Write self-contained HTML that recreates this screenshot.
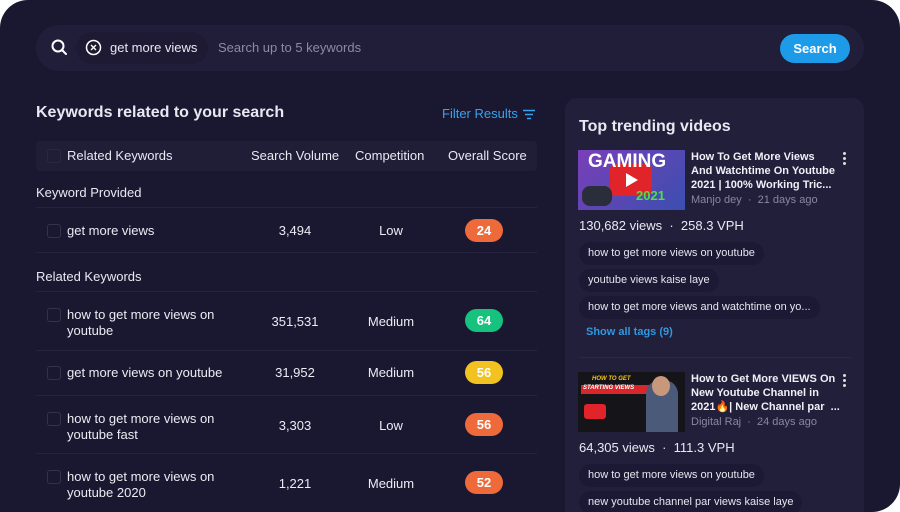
<!DOCTYPE html>
<html><head><meta charset="utf-8"><style>
*{margin:0;padding:0;box-sizing:border-box}
html,body{width:900px;height:512px;background:#fff;overflow:hidden}
body{font-family:"Liberation Sans",sans-serif;color:#e9e8f2;position:relative}
.frame{position:absolute;left:0;top:0;width:900px;height:512px;background:#1a1830;border-radius:28px 28px 28px 0;overflow:hidden}
.abs{position:absolute}
.search{left:36px;top:25px;width:828px;height:46px;background:#211e39;border-radius:23px}
.chip{left:76px;top:32px;width:132px;height:32px;background:#1e1a34;border-radius:16px}
.btn{left:780px;top:34px;width:70px;height:29px;background:#1d9ae8;border-radius:15px;color:#fff;font-size:13px;font-weight:bold;text-align:center;line-height:29px}
.t{position:absolute;white-space:nowrap}
.hdr{left:36px;top:141px;width:501px;height:30px;background:#201d36;border-radius:4px}
.sep{position:absolute;left:36px;width:501px;height:1px;background:#26233f}
.cb{position:absolute;left:47px;width:14px;height:14px;border:1.5px solid #34304e;border-radius:3px}
.badge{position:absolute;left:465px;width:38px;height:23px;border-radius:12px;color:#fff;font-weight:bold;font-size:13px;text-align:center;line-height:23px}
.kw{font-size:13px;line-height:16px;color:#ecebf3}
.num{font-size:13px;text-align:center;width:100px;color:#ecebf3}
.panel{left:565px;top:98px;width:299px;height:430px;background:#221f3b;border-radius:12px}
.tag{position:absolute;left:579px;height:23px;background:#1c1934;border-radius:12px;font-size:11px;line-height:23px;padding:0 9px;color:#e6e5ef;white-space:nowrap}
.vt{font-size:11px;line-height:14px;color:#f0eff6;font-weight:bold}
.dots{position:absolute;width:3px;height:3px;background:#ddd;border-radius:50%;box-shadow:0 5px 0 #ddd,0 10px 0 #ddd}
</style></head><body><div class="frame">
<div class="abs search"></div>
<svg class="abs" style="left:51px;top:39px" width="17" height="17" viewBox="0 0 17 17"><circle cx="7" cy="7" r="5.5" fill="none" stroke="#fff" stroke-width="2"/><line x1="11" y1="11" x2="15" y2="15" stroke="#fff" stroke-width="2" stroke-linecap="round"/></svg>
<div class="abs chip"></div>
<svg class="abs" style="left:85px;top:39px" width="17" height="17" viewBox="0 0 17 17"><circle cx="8.5" cy="8.5" r="7" fill="none" stroke="#fff" stroke-width="1.5"/><path d="M6 6L11 11M11 6L6 11" stroke="#fff" stroke-width="1.4"/></svg>
<div class="t" style="left:110px;top:40px;font-size:13px">get more views</div>
<div class="t" style="left:218px;top:40px;font-size:13px;color:#8d8aa3">Search up to 5 keywords</div>
<div class="abs btn">Search</div>

<div class="t" style="left:36px;top:104px;font-size:16px;font-weight:bold">Keywords related to your search</div>
<div class="t" style="left:442px;top:106px;font-size:13px;color:#35a3ee">Filter Results</div>
<svg class="abs" style="left:522px;top:109px" width="14" height="11"><path d="M1 1.5H13M3 5.5H11M5 9.5H9" stroke="#35a3ee" stroke-width="1.6"/></svg>

<div class="abs hdr"></div>
<div class="cb" style="top:149px;border-color:#2a2743"></div>
<div class="t" style="left:67px;top:148px;font-size:13px">Related Keywords</div>
<div class="t" style="left:251px;top:148px;font-size:13px">Search Volume</div>
<div class="t" style="left:355px;top:148px;font-size:13px">Competition</div>
<div class="t" style="left:448px;top:148px;font-size:13px">Overall Score</div>

<div class="t" style="left:36px;top:185px;font-size:13px">Keyword Provided</div>
<div class="sep" style="top:207px"></div>
<div class="cb" style="top:224px"></div>
<div class="t kw" style="left:67px;top:223px">get more views</div>
<div class="t num" style="left:245px;top:223px">3,494</div>
<div class="t num" style="left:341px;top:223px">Low</div>
<div class="badge" style="top:219px;background:#ef6a3a">24</div>
<div class="sep" style="top:252px"></div>

<div class="t" style="left:36px;top:269px;font-size:13px">Related Keywords</div>
<div class="sep" style="top:291px"></div>
<div class="cb" style="top:308px"></div>
<div class="t kw" style="left:67px;top:307px">how to get more views on<br>youtube</div>
<div class="t num" style="left:245px;top:314px">351,531</div>
<div class="t num" style="left:341px;top:314px">Medium</div>
<div class="badge" style="top:309px;background:#16c27d">64</div>
<div class="sep" style="top:350px"></div>
<div class="cb" style="top:366px"></div>
<div class="t kw" style="left:67px;top:365px">get more views on youtube</div>
<div class="t num" style="left:245px;top:365px">31,952</div>
<div class="t num" style="left:341px;top:365px">Medium</div>
<div class="badge" style="top:361px;background:#f2c320">56</div>
<div class="sep" style="top:395px"></div>
<div class="cb" style="top:412px"></div>
<div class="t kw" style="left:67px;top:411px">how to get more views on<br>youtube fast</div>
<div class="t num" style="left:245px;top:418px">3,303</div>
<div class="t num" style="left:341px;top:418px">Low</div>
<div class="badge" style="top:413px;background:#ef6a3a">56</div>
<div class="sep" style="top:453px"></div>
<div class="cb" style="top:470px"></div>
<div class="t kw" style="left:67px;top:469px">how to get more views on<br>youtube 2020</div>
<div class="t num" style="left:245px;top:476px">1,221</div>
<div class="t num" style="left:341px;top:476px">Medium</div>
<div class="badge" style="top:471px;background:#ef6a3a">52</div>

<div class="abs panel"></div>
<div class="t" style="left:579px;top:118px;font-size:16px;font-weight:bold">Top trending videos</div>
<div class="abs" style="left:578px;top:150px;width:107px;height:60px;background:linear-gradient(135deg,#7a3fb8,#3b4fb0);overflow:hidden">
<div class="abs" style="left:32px;top:14px;width:42px;height:32px;background:#e0242a;border-radius:6px"></div>
<div class="abs" style="left:48px;top:23px;width:0;height:0;border-left:12px solid #fff;border-top:7px solid transparent;border-bottom:7px solid transparent"></div>
<div class="t" style="left:10px;top:1px;font-size:19px;font-weight:bold;color:#fff">GAMING</div>
<div class="t" style="left:58px;top:38px;font-size:13px;font-weight:bold;color:#4be04b">2021</div>
<div class="abs" style="left:4px;top:36px;width:30px;height:20px;background:#2a2d3a;border-radius:8px"></div>
</div>
<div class="t vt" style="left:691px;top:150px">How To Get More Views<br>And Watchtime On Youtube<br>2021 | 100% Working Tric...</div>
<div class="t" style="left:691px;top:194px;font-size:11px;color:#8a879e">Manjo dey &nbsp;·&nbsp; 21 days ago</div>
<div class="dots" style="left:843px;top:152px"></div>
<div class="t" style="left:579px;top:218px;font-size:13px">130,682 views &nbsp;·&nbsp; 258.3 VPH</div>
<div class="tag" style="top:242px">how to get more views on youtube</div>
<div class="tag" style="top:269px">youtube views kaise laye</div>
<div class="tag" style="top:296px">how to get more views and watchtime on yo...</div>
<div class="t" style="left:586px;top:326px;font-size:11px;font-weight:bold;color:#2e98e0">Show all tags (9)</div>
<div class="abs" style="left:579px;top:357px;width:272px;height:1px;background:#2b2845"></div>
<div class="abs" style="left:578px;top:372px;width:107px;height:60px;background:#151418;overflow:hidden">
<div class="t" style="left:14px;top:4px;font-size:6px;font-weight:bold;color:#f5c518;font-style:italic">HOW TO GET</div>
<div class="abs" style="left:3px;top:13px;width:68px;height:9px;background:#d8262a"></div>
<div class="t" style="left:5px;top:13px;font-size:6px;font-weight:bold;color:#fff;font-style:italic">STARTING VIEWS</div>
<div class="abs" style="left:6px;top:32px;width:22px;height:15px;background:#e0242a;border-radius:3px"></div>
<div class="abs" style="left:68px;top:8px;width:32px;height:52px;background:#4a5a78;border-radius:14px 14px 0 0"></div>
<div class="abs" style="left:74px;top:4px;width:18px;height:20px;background:#c9987a;border-radius:50%"></div>
</div>
<div class="t vt" style="left:691px;top:372px">How to Get More VIEWS On<br>New Youtube Channel in<br>2021🔥| New Channel par &nbsp;...</div>
<div class="t" style="left:691px;top:416px;font-size:11px;color:#8a879e">Digital Raj &nbsp;·&nbsp; 24 days ago</div>
<div class="dots" style="left:843px;top:374px"></div>
<div class="t" style="left:579px;top:440px;font-size:13px">64,305 views &nbsp;·&nbsp; 111.3 VPH</div>
<div class="tag" style="top:464px">how to get more views on youtube</div>
<div class="tag" style="top:491px">new youtube channel par views kaise laye</div>
</div></body></html>
